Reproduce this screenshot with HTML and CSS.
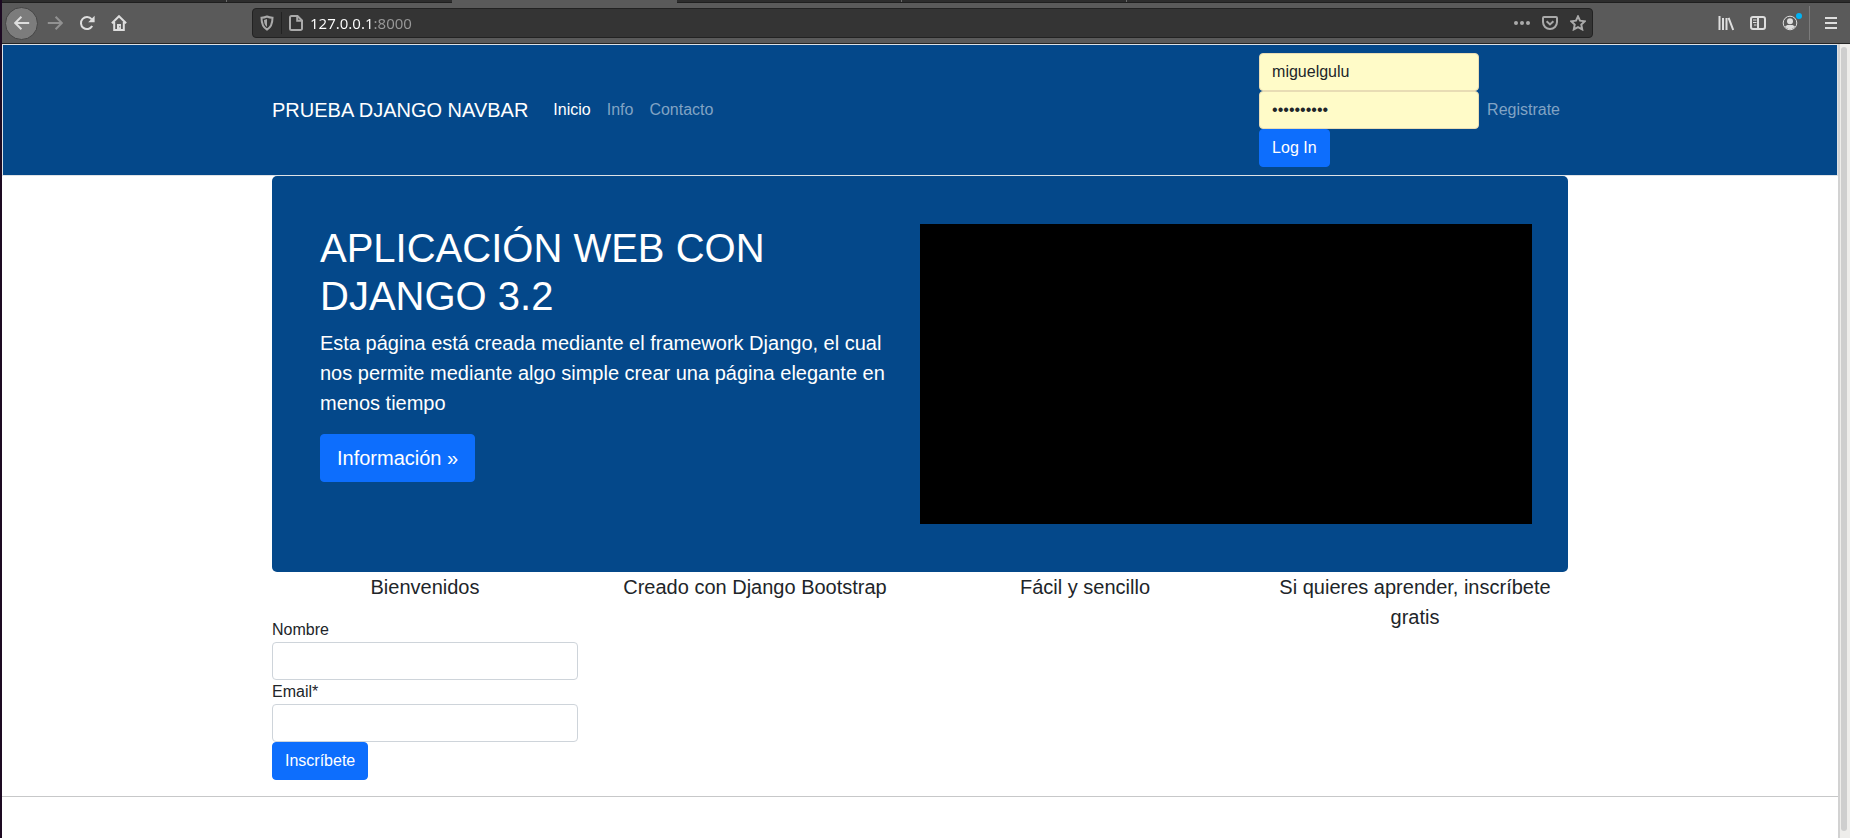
FILE: index.html
```html
<!DOCTYPE html>
<html lang="es">
<head>
<meta charset="utf-8">
<meta name="viewport" content="width=device-width, initial-scale=1">
<title>Prueba Django</title>
<link rel="stylesheet" href="styles.css">
</head>
<body>
<div class="window">
  <div class="tabs" aria-hidden="true">
    <span class="tab"></span>
    <span class="tab"></span>
    <span class="tab tab-active"></span>
    <span class="tab"></span>
    <span class="tab"></span>
    <span class="tab"></span>
  </div>

  <div class="toolbar">
    <div class="tools tools-start">
      <button class="tool tool-back" type="button" aria-label="Atrás">
        <svg class="icon" viewBox="0 0 16 16"><path d="M15.2 8H1.4M7.4 1.8 1.2 8l6.2 6.2"/></svg>
      </button>
      <button class="tool tool-dim" type="button" aria-label="Adelante">
        <svg class="icon" viewBox="0 0 16 16"><path d="M.8 8h13.8M8.6 1.8 14.8 8l-6.2 6.2"/></svg>
      </button>
      <button class="tool" type="button" aria-label="Recargar">
        <svg class="icon" viewBox="0 0 16 16"><path d="M13.2 11A6 6 0 1 1 12.6 4.2"/><path class="solid" d="M15.6.8v6.4H9.2z"/></svg>
      </button>
      <button class="tool" type="button" aria-label="Inicio">
        <svg class="icon" viewBox="0 0 16 16"><path d="M.9 8.3 8 1.2l7.100 7.100M3.200 7v7.900h9.600V7"/><path class="solid" d="M6 15V9h4v6z"/><path class="hole" d="M8.200 11.200h1v1h-1z"/></svg>
      </button>
    </div>

    <div class="urlbar">
      <svg class="icon" viewBox="0 0 16 16"><path d="M8 1.500c2 .9 3.700 1.200 5.500 1.300 0 5.500-.8 9.200-5.500 11.800C3.300 12 2.500 8.300 2.500 2.800 4.300 2.700 6 2.400 8 1.500z"/><path class="solid" d="M8 4v8C5.700 10 5.200 8 5 4.900 6.200 4.700 7 4.500 8 4z"/></svg>
      <span class="urlbar-divider"></span>
      <svg class="icon" viewBox="0 0 16 16"><path d="M3.500 1h6L14 5.500V13.500A1.500 1.500 0 0 1 12.500 15h-9A1.500 1.500 0 0 1 2 13.500v-11A1.500 1.500 0 0 1 3.500 1z"/><path d="M9.200 1v4.800H14"/></svg>
      <input class="url" type="text" value="127.0.0.1:8000" aria-label="Dirección">
      <div class="url-actions">
        <svg class="icon" viewBox="0 0 16 16"><g class="solid"><circle cx="2" cy="8" r="2"/><circle cx="8" cy="8" r="2"/><circle cx="14" cy="8" r="2"/></g></svg>
        <svg class="icon" viewBox="0 0 16 16"><path d="M2 2h12a1 1 0 0 1 1 1v4a7 7 0 0 1-14 0V3a1 1 0 0 1 1-1z"/><path d="M4.600 6.300 8 9.500l3.400-3.200"/></svg>
        <svg class="icon" viewBox="0 0 16 16"><path d="m8 1.400 2 4.300 4.800.6-3.500 3.300.9 4.800L8 12.100l-4.200 2.300.9-4.800L1.200 6.300 6 5.700z"/></svg>
      </div>
    </div>

    <div class="tools tools-end">
      <button class="tool" type="button" aria-label="Catálogo">
        <svg class="icon" viewBox="0 0 16 16"><path d="M1.500 1v14M5 3v12M8.500 3v12M10.600 2.800 15.200 15"/></svg>
      </button>
      <button class="tool" type="button" aria-label="Barra lateral">
        <svg class="icon" viewBox="0 0 16 16"><rect x="1" y="2" width="14" height="12" rx="2"/><path d="M8 2v12"/><path class="thin" d="M3 5h3.500M3 7.500h3.500M4 10h2.500"/></svg>
      </button>
      <button class="tool" type="button" aria-label="Cuenta">
        <svg class="icon" viewBox="0 0 16 16"><circle class="thin" cx="8" cy="8" r="6.800"/><circle class="solid" cx="8" cy="6.200" r="3"/><path class="solid" d="M3 11.500c1.300-1 2.100-1.500 3-1.500h4c.9 0 1.700.5 3 1.500A6 6 0 0 1 3 11.500z"/></svg>
        <span class="tool-badge"></span>
      </button>
      <span class="tools-divider"></span>
      <button class="tool tool-menu" type="button" aria-label="Menú">
        <svg class="icon" viewBox="0 0 16 16"><path d="M2 3h12M2 8h12M2 13h12"/></svg>
      </button>
    </div>
  </div>

  <div class="viewport">
    <div class="page">
      <nav class="navbar">
        <div class="container navbar-inner">
          <a class="brand" href="#">PRUEBA DJANGO NAVBAR</a>
          <div class="nav-links">
            <a class="nav-link nav-link-active" href="#">Inicio</a>
            <a class="nav-link" href="#">Info</a>
            <a class="nav-link" href="#">Contacto</a>
          </div>
          <form class="login">
            <input class="field field-filled" type="text" value="miguelgulu" aria-label="Usuario">
            <input class="field field-filled" type="password" value="contrasena" aria-label="Contraseña">
            <button class="btn" type="button">Log In</button>
          </form>
          <a class="nav-link" href="#">Registrate</a>
        </div>
      </nav>

      <main class="container">
        <section class="hero">
          <div class="hero-text">
            <h1 class="hero-title">APLICACIÓN WEB CON DJANGO 3.2</h1>
            <p class="lead">Esta página está creada mediante el framework Django, el cual nos permite mediante algo simple crear una página elegante en menos tiempo</p>
            <a class="btn btn-large" href="#">Información »</a>
          </div>
          <div class="video"></div>
        </section>

        <section class="features">
          <div class="feature">
            <p class="feature-title">Bienvenidos</p>
            <form class="signup">
              <label for="nombre">Nombre</label>
              <input class="field" id="nombre" type="text">
              <label for="email">Email*</label>
              <input class="field" id="email" type="email">
              <button class="btn" type="button">Inscríbete</button>
            </form>
          </div>
          <div class="feature"><p class="feature-title">Creado con Django Bootstrap</p></div>
          <div class="feature"><p class="feature-title">Fácil y sencillo</p></div>
          <div class="feature"><p class="feature-title">Si quieres aprender, inscríbete gratis</p></div>
        </section>
      </main>
      <hr class="rule">
    </div>
    <div class="scrollbar" aria-hidden="true"><div class="thumb"></div></div>
  </div>
</div>
</body>
</html>
```
FILE: styles.css
```css
*,
*::before,
*::after {
  box-sizing: border-box;
}

body {
  margin: 0;
  background: #fff;
  color: #212529;
  font-family: "Liberation Sans", Arial, sans-serif;
  font-size: 16px;
  line-height: 24px;
}

a {
  text-decoration: none;
}

button,
input {
  font: inherit;
}

.window {
  display: flex;
  flex-direction: column;
  min-height: 100vh;
  border-left: 2px solid #1d0a22;
}

/* Browser chrome */
.tabs {
  display: flex;
  height: 3px;
  background: #2d2d2d;
  border-bottom: 1px solid #1f1f1f;
}

.tab {
  width: 225px;
  border-right: 1px solid #6b6b6b;
}

.tab:nth-child(2),
.tab-active,
.tab:last-child {
  border-right-color: transparent;
}

.tab-active {
  height: 3px;
  background: #5a5a5a;
}

.toolbar {
  display: flex;
  align-items: center;
  height: 41px;
  background: #5a5a5a;
  border-bottom: 1px solid #262626;
}

.tools {
  display: flex;
  align-items: center;
}

.tools-start {
  width: 250px;
  padding-left: 3px;
}

.tools-end {
  justify-content: flex-end;
  width: 257px;
  padding-right: 3px;
}

.tool {
  position: relative;
  display: grid;
  place-items: center;
  width: 32px;
  height: 32px;
  padding: 0;
  border: 0;
  background: none;
  color: #dedede;
}

.tool-back {
  width: 33px;
  height: 33px;
  margin-right: 1px;
  border: 1px solid #454545;
  border-radius: 50%;
  background: #7c7c7c;
}

.tool-dim {
  color: #929292;
}

.tool-badge {
  position: absolute;
  top: 6px;
  right: 4px;
  width: 6px;
  height: 6px;
  border-radius: 50%;
  background: #00b3f4;
}

.tools-divider {
  width: 1px;
  height: 34px;
  margin-left: 3px;
  background: #7b7b7b;
}

.tool-menu {
  margin-left: 5px;
}

.icon {
  flex: none;
  width: 16px;
  height: 16px;
  fill: none;
  stroke: currentColor;
  stroke-width: 2;
}

.icon .solid {
  fill: currentColor;
  stroke: none;
}

.icon .hole {
  fill: #5a5a5a;
  stroke: none;
}

.icon .thin {
  stroke-width: 1;
}

.urlbar {
  display: flex;
  flex: 1;
  align-items: center;
  height: 30px;
  padding: 0 6px;
  border: 1px solid #222;
  border-radius: 4px;
  background: #343434;
  color: #aaa;
}

.urlbar-divider {
  width: 1px;
  height: 22px;
  margin: 0 6px;
  background: #222;
}

.url {
  flex: 1;
  min-width: 0;
  height: 22px;
  margin-left: 6px;
  padding: 0;
  border: 0;
  outline: 0;
  background: linear-gradient(to right, #fff 64px, #999 64px);
  background-clip: text;
  color: transparent;
  font-family: "Noto Sans", sans-serif;
  font-size: 15px;
}

.url-actions {
  display: flex;
  gap: 12px;
}

.viewport {
  display: flex;
  flex: 1;
}

.page {
  flex: 1;
  min-width: 0;
}

.scrollbar {
  display: flex;
  width: 12px;
  padding: 3px 3px 7px 1px;
  border-left: 2px solid #d2d2d2;
  background: #eeedeb;
}

.thumb {
  width: 6px;
  margin-left: auto;
  border-radius: 3px;
  background: #cecece;
}

/* Site */
.container {
  width: 100%;
  max-width: 1320px;
  margin: 0 auto;
  padding: 0 12px;
}

.navbar {
  padding: 8px 0;
  border: 1px solid #dee2e6;
  background: #04488a;
}

.navbar-inner {
  display: flex;
  align-items: center;
}

.brand {
  margin-right: 17px;
  color: #fff;
  font-size: 20px;
  line-height: 30px;
}

.nav-links {
  display: flex;
  margin-right: auto;
}

.nav-link {
  padding: 8px;
  color: #81a3c4;
}

.nav-link-active {
  color: #fff;
}

.login {
  display: flex;
  flex-direction: column;
  align-items: flex-start;
  width: 220px;
}

.field {
  display: block;
  width: 100%;
  height: 38px;
  padding: 6px 12px;
  border: 1px solid #ced4da;
  border-radius: 4px;
  background: #fff;
  color: #212529;
}

.field-filled {
  border-color: #e8dcb4;
  background: #fffbc8;
}

.btn {
  display: inline-block;
  padding: 6px 12px;
  border: 1px solid #0d6efd;
  border-radius: 4px;
  background: #0d6efd;
  color: #fff;
  line-height: 24px;
}

.btn-large {
  padding: 8px 16px;
  font-size: 20px;
  line-height: 30px;
}

.hero {
  display: grid;
  grid-template-columns: 1fr 1fr;
  padding: 48px 36px;
  border-radius: 5px;
  background: #04488a;
  color: #fff;
}

.hero-text {
  padding: 0 12px;
}

.hero-title {
  margin: 0 0 8px;
  font-size: 40px;
  font-weight: 400;
  line-height: 48px;
}

.lead {
  margin: 0 0 16px;
  font-size: 20px;
  line-height: 30px;
}

.video {
  min-height: 300px;
  background: #000;
}

.features {
  display: grid;
  grid-template-columns: repeat(4, 1fr);
  gap: 24px;
}

.feature-title {
  margin: 0 0 16px;
  font-size: 20px;
  line-height: 30px;
  text-align: center;
}

.signup {
  display: flex;
  flex-direction: column;
  align-items: flex-start;
}

.rule {
  margin: 16px 0;
  border: 0;
  border-top: 1px solid #c7c8c9;
}
```
